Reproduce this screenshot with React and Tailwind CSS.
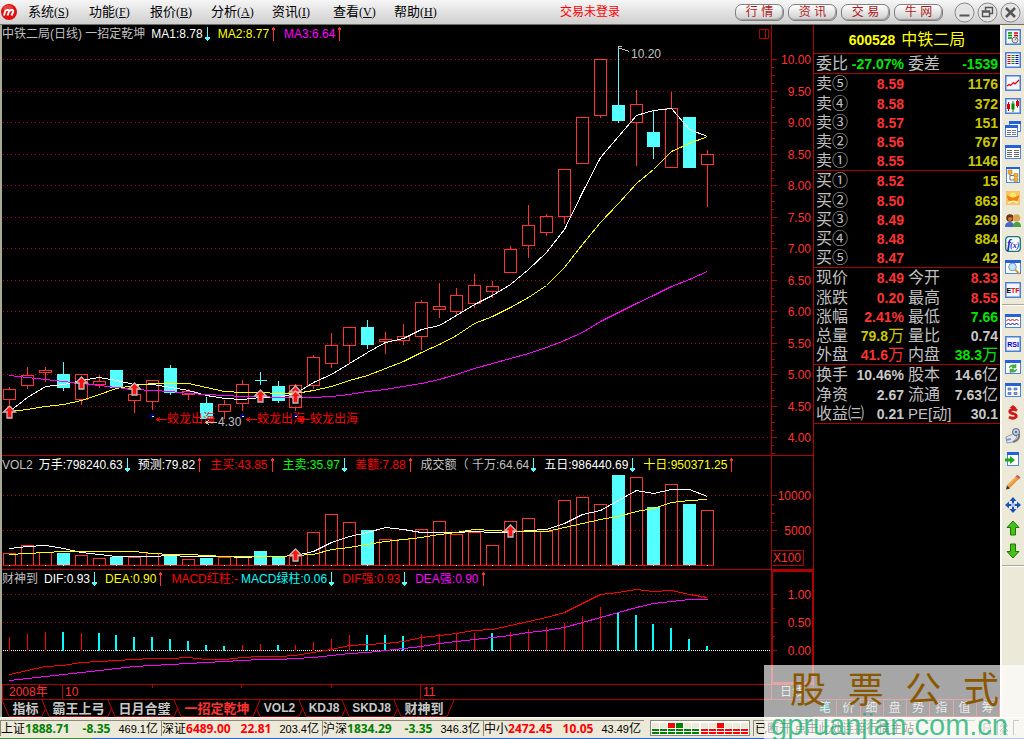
import React from "react";

const RED = "#ff3232";
const DARK = "#b00000";
const CYAN = "#54ffff";

const cx = (i) => Math.round(9 + 17.9 * i) + 0.5;

/* kind (h = hollow, f = filled, x = doji), body top, body bottom, high, low */
const CANDLES = [
  ["h", 389, 399, 387, 405], ["h", 375, 385, 367, 389], ["h", 370, 372, 367, 382], ["f", 374, 388, 362, 391],
  ["h", 374, 399, 374, 405], ["h", 381, 384, 375, 388], ["f", 370, 388, 370, 388], ["h", 394, 400, 387, 413],
  ["h", 380, 401, 380, 410], ["f", 368, 393, 365, 395], ["h", 391, 394, 389, 400], ["f", 403, 419, 397, 419],
  ["h", 404, 411, 400, 419], ["h", 384, 403, 380, 411], ["x", 380, 380, 372, 385], ["f", 386, 401, 381, 403],
  ["h", 385, 407, 384, 411], ["h", 357, 385, 355, 389], ["h", 345, 363, 333, 368], ["h", 327, 345, 327, 363],
  ["f", 327, 345, 320, 349], ["h", 339, 341, 332, 354], ["h", 336, 340, 324, 345], ["h", 302, 336, 300, 350],
  ["h", 306, 309, 283, 318], ["h", 295, 311, 288, 316], ["h", 285, 303, 274, 308], ["h", 286, 291, 281, 298],
  ["h", 249, 272, 246, 272], ["h", 225, 245, 205, 258], ["h", 216, 232, 214, 236], ["h", 169, 216, 169, 224],
  ["h", 117, 163, 117, 163], ["h", 59, 115, 59, 118], ["f", 105, 121, 46, 123], ["h", 104, 122, 90, 166],
  ["f", 132, 147, 110, 159], ["h", 108, 167, 92, 167], ["f", 117, 168, 117, 168], ["h", 154, 164, 150, 207],
];
const MA1 = [411, 397, 386, 384, 380, 377, 380, 384, 384, 387, 390, 395, 398, 399, 397, 397, 393, 382, 374, 363, 352, 342, 338, 329, 325, 315, 304, 295, 284, 269, 252, 229, 192, 157, 136, 115, 110, 108, 129, 136];
const MA2 = [411, 409, 406, 404, 400, 394, 388, 385, 383, 383, 383, 387, 391, 392, 392, 393, 393, 390, 386, 380, 375, 368, 361, 352, 344, 335, 323, 316, 307, 297, 285, 267, 244, 222, 203, 183, 169, 151, 143, 136];
const MA3 = [375, 377, 379, 381, 383, 385, 387, 389, 390, 391, 393, 394, 395, 396, 396, 397, 397, 397, 396, 394, 391, 389, 386, 383, 379, 374, 368, 363, 358, 353, 347, 340, 332, 321, 312, 303, 295, 286, 279, 271];

const VOLUME = [553, 545, 552, 553, 555, 558, 557, 557, 553, 554, 559, 558, 557, 557, 551, 556, 556, 532, 514, 522, 530, 539, 539, 529, 521, 534, 532, 545, 521, 518, 531, 500, 497, 504, 475, 477, 507, 484, 504, 510];
const VOL_CYAN = [3, 6, 9, 11, 14, 15, 20, 34, 36, 38];
const VMA5 = [548, 546, 545, 548, 552, 554, 556, 556, 556, 555, 556, 556, 556, 557, 556, 556, 555, 551, 542, 536, 532, 527, 529, 532, 532, 532, 531, 532, 532, 530, 529, 523, 514, 510, 500, 490, 493, 489, 489, 496];
const VMA10 = [554, 553, 552, 551, 551, 551, 551, 551, 553, 554, 554, 555, 556, 556, 556, 556, 555, 554, 549, 547, 544, 541, 539, 537, 534, 532, 529, 530, 531, 531, 531, 527, 523, 519, 516, 511, 508, 502, 500, 499];

const MACD = [637, 634, 632, 632, 633, 633, 635, 637, 637, 639, 641, 645, 646, 645, 644, 645, 645, 642, 639, 635, 635, 635, 636, 634, 634, 634, 633, 633, 632, 629, 627, 623, 616, 607, 612, 615, 624, 628, 639, 646];
const MACD_CYAN = [3, 5, 6, 7, 8, 9, 10, 11, 12, 15, 20, 21, 22, 27, 34, 35, 36, 37, 38, 39];
const DIF = [674, 670, 666, 665, 662, 661, 660, 659, 658, 658, 657, 659, 659, 657, 656, 656, 655, 652, 649, 645, 644, 643, 641, 637, 635, 633, 630, 629, 625, 621, 617, 612, 603, 594, 592, 589, 591, 590, 594, 597];
const DEA = [680, 678, 676, 674, 672, 670, 668, 666, 665, 664, 663, 662, 661, 660, 659, 659, 658, 657, 655, 653, 652, 650, 648, 646, 643, 641, 639, 637, 635, 632, 630, 627, 622, 617, 612, 607, 603, 601, 599, 599];

function Line({ data, color }) {
  return <polyline points={data.map((y, i) => `${cx(i)},${y + 0.5}`).join(" ")} fill="none" stroke={color} strokeWidth="1" />;
}

function Grid({ ys }) {
  return ys.map((y) => <line key={y} x1="3" x2="4000" y1={y + 0.5} y2={y + 0.5} stroke={DARK} strokeDasharray="1 3" />);
}

function Buy({ x, y }) {
  return <path d={`M${x} ${y - 6}l6 6h-3.5v6h-5v-6h-3.5z`} fill="#ff1010" stroke="#c8b8b8" strokeWidth="1.3" shapeRendering="auto" />;
}

function Candle({ c, i }) {
  const [kind, top, bottom, high, low] = c;
  const x = cx(i);
  const color = kind === "h" ? RED : CYAN;
  return (
    <g stroke={color} fill="none">
      {high < top && <line x1={x} x2={x} y1={high} y2={top} />}
      {low > bottom && <line x1={x} x2={x} y1={bottom} y2={low} />}
      {kind === "h" && <rect x={x - 6} y={top + 0.5} width="12" height={bottom - top} />}
      {kind === "f" && <rect x={x - 6.5} y={top} width="13" height={bottom - top} fill={CYAN} stroke="none" />}
      {kind === "x" && <line x1={x - 6} x2={x + 6} y1={top + 0.5} y2={top + 0.5} />}
    </g>
  );
}

function Signal({ x }) {
  return (
    <g>
      <circle cx={x - 5} cy="416" r="2" fill="#0000a0" shapeRendering="auto" />
      <rect x={x - 5} y="416" width="2" height="1" fill="#fff" />
      <path d={`M${x} 419.5h10M${x + 3} 417l-3 2.5l3 2.5`} fill="none" stroke="#f00" />
      <text x={x + 10} y="423" className="fill-[#ff0000] text-[12px]">蛟龙出海</text>
    </g>
  );
}

function Trend({ dir }) {
  return (
    <svg className="ml-px h-[16px] w-[6px] shrink-0" viewBox="0 0 6 16" shapeRendering="crispEdges" aria-hidden="true">
      {dir === "up" ? (
        <path d="M3 1h1v1h1v2h-1v11h-1V4h-1V2h1z" fill={RED} />
      ) : (
        <path d="M3 1h1v10h2v2h-1v1h-1v1h-1v-1h-1v-1h-1v-2h2z" fill={CYAN} />
      )}
    </svg>
  );
}

function Header({ name, items, children }) {
  return (
    <div className="flex h-[18px] items-center overflow-hidden whitespace-pre text-[12px] leading-[18px]">
      <span className="mr-[6px] text-[#c0c0c0]">{name}</span>
      {items.map(([text, cls, dir]) => (
        <span key={text} className={"flex items-center " + (dir ? "mr-[8px] " : "mr-[3px] ") + cls}>
          {text}
          {dir && <Trend dir={dir} />}
        </span>
      ))}
      {children}
    </div>
  );
}

function PriceAxis() {
  const labels = ["10.00", "9.50", "9.00", "8.50", "8.00", "7.50", "7.00", "6.50", "6.00", "5.50", "5.00", "4.50", "4.00"];
  return (
    <svg className="block h-[430px] w-full" shapeRendering="crispEdges">
      <g transform="translate(0,-25)">
        {labels.map((t, k) => {
          const y = Math.round(59 + 31.5 * k);
          return (
            <g key={t}>
              <path d={`M0 ${y + 0.5}h5M0 ${y + 8.5}h2M0 ${y + 16.5}h3M0 ${y + 24.5}h2`} stroke={DARK} />
              <text x="39" y={y + 5} textAnchor="end" className="fill-[#ff3232] text-[12px]">{t}</text>
            </g>
          );
        })}
      </g>
    </svg>
  );
}

const INDEX_BTNS = ["行 情", "资 讯", "交 易", "牛 网"];
const MENUS = [["系统", "S"], ["功能", "F"], ["报价", "B"], ["分析", "A"], ["资讯", "I"], ["查看", "V"], ["帮助", "H"]];

function TopBar() {
  return (
    <header className="flex h-[24px] items-center bg-gradient-to-b from-[#f6f6f6] to-[#cfcfcf] text-[12px]">
      <svg className="ml-[1px] h-[16px] w-[16px]" viewBox="0 0 16 16" aria-hidden="true">
        <circle cx="8" cy="8" r="8" fill="#e01010" />
        <ellipse cx="7" cy="4" rx="5" ry="3" fill="#f06060" opacity=".6" />
        <path d="M3 11.500L4.500 6M6.500 11.500L8 7.500Q8.300 5.800 6.500 6L4.500 6.500M10.500 11.500L12.300 7.500Q12.500 5.500 10.500 6L8 7" fill="none" stroke="#fff" strokeWidth="1.900" />
      </svg>
      <nav className="ml-[11px] flex">
        {MENUS.map(([t, k]) => (
          <button key={t} type="button" className="flex w-[61px] items-center whitespace-nowrap text-[13px] text-black">
            {t}
            <span className="font-['Liberation_Serif',serif] text-[12px]">(<u>{k}</u>)</span>
          </button>
        ))}
      </nav>
      <span className="ml-auto mr-[115px] text-[#ff0000]">交易未登录</span>
      <div className="flex gap-[4px]">
        {INDEX_BTNS.map((t) => (
          <button key={t} type="button" className="flex h-[17px] w-[49px] items-center justify-center whitespace-pre rounded-[7px] border border-[#808080] bg-gradient-to-b from-white to-[#cccccc] text-[12px] leading-none text-[#b01818] shadow-[inset_-1px_-1px_1px_#999]">
            {t}
          </button>
        ))}
      </div>
      <div className="ml-[11px] mr-[3px] flex gap-[2px]">
        {[
          ["最小化", <path key="a" d="M5.500 13.500h10" strokeWidth="2" />],
          ["还原", <path key="b" d="M8.500 8V5.500h7v6h-2.500M5.500 9h7v5.500h-7zM5.500 10h7" strokeWidth="1.400" />],
          ["关闭", <path key="c" d="M6 6l9 9M15 6l-9 9" strokeWidth="2.600" />],
        ].map(([label, d]) => (
          <button key={label} type="button" aria-label={label} className="h-[21px] w-[21px]">
            <svg viewBox="0 0 21 21" className="h-full w-full" fill="none" stroke="#555">
              <circle cx="10.500" cy="10.500" r="9.500" stroke="#888" fill="#e4e4e4" />
              {d}
            </svg>
          </button>
        ))}
      </div>
    </header>
  );
}

const R = "text-[#ff3232]";
const G = "text-[#00e600]";
const Y = "text-[#c8c800]";
const W = "text-[#c8c8c8]";
const GROUPS = [
  [["委比", "-27.07%", G, "委差", "-1539", G]],
  [["卖⑤", "8.59", R, "", "1176", Y], ["卖④", "8.58", R, "", "372", Y], ["卖③", "8.57", R, "", "151", Y], ["卖②", "8.56", R, "", "767", Y], ["卖①", "8.55", R, "", "1146", Y]],
  [["买①", "8.52", R, "", "15", Y], ["买②", "8.50", R, "", "863", Y], ["买③", "8.49", R, "", "269", Y], ["买④", "8.48", R, "", "884", Y], ["买⑤", "8.47", R, "", "42", Y]],
  [["现价", "8.49", R, "今开", "8.33", R], ["涨跌", "0.20", R, "最高", "8.55", R], ["涨幅", "2.41%", R, "最低", "7.66", G], ["总量", "79.8万", Y, "量比", "0.74", W], ["外盘", "41.6万", R, "内盘", "38.3万", G]],
  [["换手", "10.46%", W, "股本", "14.6亿", W], ["净资", "2.67", W, "流通", "7.63亿", W], ["收益㈢", "0.21", W, "PE[动]", "30.1", W]],
];

function Value({ text }) {
  const unit = text.match(/[万亿]$/);
  return unit ? <>{text.slice(0, -1)}<span className="text-[16px] font-normal">{unit[0]}</span></> : text;
}

function QuotePanel() {
  const tabs = ["笔", "价", "细", "盘", "势", "指", "值", "筹"];
  return (
    <aside className="flex w-[186px] shrink-0 flex-col bg-black">
      <h1 className="flex h-[28px] items-center justify-center gap-[6px] pt-[2px] text-[16px] text-[#ffff00]">
        <b className="text-[14px]">600528</b>中铁二局
      </h1>
      <table className="w-full table-fixed border-separate border-spacing-0 whitespace-nowrap text-[16px] leading-[18px]">
        <colgroup>
          <col className="w-[34px]" />
          <col className="w-[58px]" />
          <col className="w-[34px]" />
          <col />
        </colgroup>
        {GROUPS.map((rows, g) => (
          <tbody key={g}>
            {rows.map(([a, b, cb, c, d, cd], r) => {
              const edge = r === 0 ? "border-t border-[#b00000] " : "";
              const h = r === 0 && g > 0 ? "h-[21px] " : r === 0 ? "h-[20px] " : "h-[19px] ";
              return (
                <tr key={a}>
                  <th scope="row" className={edge + h + "pl-[2px] text-left font-normal text-[#c0c0c0]"}>{a}</th>
                  <td className={edge + "pr-[2px] text-right text-[14px] font-bold " + cb}><Value text={b} /></td>
                  <td className={edge + "pl-[2px] text-[#c0c0c0]"}>{c.startsWith("PE") ? <span className="text-[15px]">{c}</span> : c}</td>
                  <td className={edge + "pr-[2px] text-right text-[14px] font-bold " + cd}><Value text={d} /></td>
                </tr>
              );
            })}
          </tbody>
        ))}
      </table>
      <div className="border-t border-[#b00000]" />
      <div className="mt-auto flex h-[18px] border-t border-[#b00000] text-[12px] leading-none text-[#c0c0c0]">
        {tabs.map((t, i) => (
          <button key={t} type="button" className={"flex-1 border-b border-r border-[#b00000] " + (i === 0 ? "text-[#54ffff]" : "")}>{t}</button>
        ))}
      </div>
    </aside>
  );
}

function Win({ children }) {
  return (
    <>
      <rect x=".5" y="1.500" width="15" height="13" fill="#fff" stroke="#4a86e0" />
      <rect x="0" y="1" width="16" height="3" fill="#2460d8" />
      {children}
    </>
  );
}
function Box({ children }) {
  return (
    <>
      <rect x=".75" y=".75" width="14.500" height="14.500" fill="#f4f6fc" stroke="#4a80d8" strokeWidth="1.500" />
      {children}
    </>
  );
}

const TOOLS = [
  ["报价", <Box key="1"><path d="M3 4h4M3 6.500h4M3 9h4" stroke="#080" strokeWidth="1.300" /><path d="M9 4h4M9 6.500h4" stroke="#d00" strokeWidth="1.300" /><circle cx="10" cy="11" r="3" fill="#ddd" stroke="#777" /><path d="M10 11l3-4" stroke="#777" /></Box>],
  ["列表", <Box key="1"><path d="M4 3v10" stroke="#d00" strokeWidth="3" strokeDasharray="1 1" /><path d="M8 3v10" stroke="#080" strokeWidth="3" strokeDasharray="1 1" /><path d="M12 3v10" stroke="#00c" strokeWidth="3" strokeDasharray="1 1" /></Box>],
  ["分时", <Box key="1"><path d="M2 11l2-1.500l1.500 1l3-3l1.500 1.500l2-2l2-2" fill="none" stroke="#d00" strokeWidth="1.200" /></Box>],
  ["K线", <Box key="1"><path d="M3.500 4v9M12.500 1.500v8" stroke="#d00" /><path d="M8 3v11" stroke="#080" /><rect x="2" y="6" width="3" height="5" fill="#d00" /><rect x="6.500" y="5.500" width="3" height="6" fill="#080" /><rect x="11" y="3" width="3" height="5" fill="#d00" /></Box>],
  ["多窗口", <g key="1"><rect x="4.500" y=".5" width="11" height="10" fill="#fff" stroke="#4a86e0" /><rect x="4" y="0" width="12" height="3" fill="#2460d8" /><rect x=".5" y="4.500" width="12" height="11" fill="#fff" stroke="#4a86e0" /><rect x="0" y="4" width="13" height="3" fill="#2460d8" /><path d="M2 9.500h4M7 9.500h4M2 11.500h4M7 11.500h4M2 13.500h4M7 13.500h4" stroke="#777" /></g>],
  ["双栏", <Win key="1"><path d="M2 6.500h5M9 6.500h5M2 8.500h5M9 8.500h5M2 10.500h5M9 10.500h5M2 12.500h5M9 12.500h5" stroke="#666" /></Win>],
  ["目录", <g key="1"><rect x="1.500" y=".5" width="13" height="15" fill="#fff" stroke="#4a86e0" /><rect x="1" y="0" width="14" height="2" fill="#2460d8" /><path d="M5 7v6h4M5 8.500h4" fill="none" stroke="#777" /><path d="M3 3h4v4H3zM9 6.500h4v3.500H9zM9 11h4v3.500H9z" fill="#f0b030" stroke="#a87010" strokeWidth=".5" /></g>],
  ["财富", <g key="1"><rect x="1" y="1" width="14" height="14" fill="#f7c568" /><path d="M2 5q6 5 12 0q0 7-6 8q-6-1-6-8" fill="#f08010" /><ellipse cx="8" cy="5" rx="3" ry="2.500" fill="#ffe860" /><path d="M3 13q5-3 10 0" stroke="#fff2b0" strokeWidth="2" fill="none" /></g>],
  ["用户", <g key="1"><circle cx="5" cy="5" r="3.800" fill="#6a3210" /><circle cx="5" cy="6" r="2" fill="#c87840" /><circle cx="11.500" cy="5" r="3.800" fill="#d8a850" /><path d="M0 14q0-5 5-5q4 0 4 5z" fill="#4468c8" /><path d="M8 14q0-5 4-5q4 0 4 5z" fill="#48a048" /></g>],
  ["公式", <g key="1"><rect x=".7" y=".7" width="14.600" height="14.600" rx="3" fill="#fff" stroke="#107878" strokeWidth="1.300" /><text x="2" y="12" className="fill-[#1020c0] font-['Liberation_Serif',serif] text-[12px] font-bold italic">f</text><text x="5" y="12" className="fill-[#1020c0] font-['Liberation_Serif',serif] text-[8px] font-bold italic">(x)</text></g>],
  ["查找", <Win key="1"><circle cx="7.500" cy="8" r="3.800" fill="#c8e4f8" stroke="#7898b8" /><path d="M10.500 11l4 4" stroke="#d09840" strokeWidth="2" /></Win>],
  ["ETF", <Box key="1"><text x="8" y="11" textAnchor="middle" className="font-['Liberation_Sans',sans-serif] text-[7px] font-bold">E<tspan fill="#d00">TF</tspan></text></Box>],
  null,
  ["叠加", <Win key="1"><path d="M1.500 8l2-2l2 2l2-2l2 2l2-2l2 2" fill="none" stroke="#d00" /><path d="M1.500 12l2-2l2 2l2-2l2 2l2-2l2 2" fill="none" stroke="#00c" /></Win>],
  ["RSI", <Box key="1"><text x="8" y="11" textAnchor="middle" className="fill-[#0000c8] font-['Liberation_Sans',sans-serif] text-[7px] font-bold">RSI</text></Box>],
  ["刷新", <Win key="1"><path d="M4 9q1-4 6-3l1-1v4H7l1-1q-2-1-4 1M12 10q-1 4-6 3l-1 1v-4h4l-1 1q2 1 4-1" fill="#48a848" stroke="#48a848" strokeWidth=".6" /></Win>],
  ["排列", <Win key="1"><path d="M3 6h3v2H3zM9 6h3v2H9zM3 10.500h3v2H3zM9 10.500h3v2H9z" fill="#88a8e8" stroke="#4060a8" strokeWidth=".7" /></Win>],
  ["资金", <g key="1"><path d="M12 5.500Q8 3 5 5.500Q4 8 8 8.500Q12 9.500 11 12Q8 14.500 4 12" fill="none" stroke="#d01818" strokeWidth="2.800" /><path d="M4.500 3L8 0l3.500 3z" fill="#d01818" /></g>],
  ["画线", <g key="1"><path d="M1 9l7-3l4 3l-4 5l-6 1z" fill="#e8e8ee" stroke="#999" /><circle cx="11" cy="4" r="3.500" fill="#b8d0e0" stroke="#668" /><circle cx="11" cy="4" r="1.300" fill="#68a" /><path d="M14 6q1 6-6 8" fill="none" stroke="#778" strokeWidth="2" /><path d="M1 12l5-1" stroke="#68a0e0" strokeWidth="2" /></g>],
  ["转到", <g key="1"><rect x="2.500" y="1.500" width="11" height="13" fill="#fff" stroke="#4a86e0" /><rect x="2" y="1" width="12" height="3" fill="#2460d8" /><path d="M0 7.500h5V5l5 4l-5 4v-2.500H0z" fill="#18a818" /></g>],
  ["铅笔", <g key="1"><path d="M3 13L12 4" stroke="#e89838" strokeWidth="4" /><path d="M10.500 2.500L12.500 .8L15.500 3.500L13.500 5.500z" fill="#d85858" /><path d="M1 15.500l1-4l3 3z" fill="#333" /><path d="M3 11.500L11 3.500" stroke="#f8d090" /></g>],
  ["移动", <g key="1" fill="#1c50b8"><path d="M8 0l3.500 4h-7zM8 16l3.500-4h-7zM0 8l4-3.500v7zM16 8l-4-3.500v7z" /><path d="M8 3v10M3 8h10" stroke="#1c50b8" strokeWidth="2" /><circle cx="8" cy="8" r="2" fill="#a8c8f8" /></g>],
  ["上移", <path key="1" d="M8 1l6 6.500h-3.500V15h-5V7.500H2z" fill="#48c018" stroke="#187808" />],
  ["下移", <path key="1" d="M8 15l6-6.500h-3.500V1h-5v7.500H2z" fill="#48c018" stroke="#187808" />],
  null,
];

function Toolbar() {
  return (
    <div role="toolbar" className="flex w-[24px] shrink-0 flex-col items-center border-l-2 border-[#fbfaf5] bg-[#ece9d8]">
      {TOOLS.map((t, i) =>
        t === null ? (
          <div key={i} className="my-[3px] h-[2px] w-full border-b border-t border-b-white border-t-[#aca899]" />
        ) : (
          <button key={i} type="button" aria-label={t[0]} className="flex h-[23px] w-full shrink-0 items-center justify-center">
            <svg className="h-[16px] w-[16px]" viewBox="0 0 16 16">{t[1]}</svg>
          </button>
        )
      )}
    </div>
  );
}

function Slant({ kind }) {
  const d = { first: "M0 0L7 16.500", next: "M0 0L7 16.500M0 16.500L3.500 8.500", after: "M0 16.500L7 0M3.500 8.500L7 16.500", last: "M0 16.500L7 0" }[kind];
  return (
    <svg className="h-[17px] w-[7px] shrink-0 overflow-visible" viewBox="0 0 7 17" aria-hidden="true">
      <path d={d} stroke="#c80000" fill="none" />
    </svg>
  );
}

function IndicatorTabs() {
  const tabs = [
    ["指标", "w-[33px]", "first"],
    ["霸王上弓", "w-[59px]", "next"],
    ["日月合璧", "w-[59px]", "next"],
    ["一招定乾坤", "w-[72px]", "next"],
    ["VOL2", "w-[39px]", "after"],
    ["KDJ8", "w-[36px]", "next"],
    ["SKDJ8", "w-[45px]", "next"],
    ["财神到", "w-[46px]", "next"],
  ];
  return (
    <div className="flex h-[17px] text-[#c8c8c8]">
      {tabs.map(([t, w, kind], i) => (
        <React.Fragment key={t}>
          <Slant kind={kind} />
          <button type="button" className={"flex items-center justify-center overflow-visible whitespace-nowrap border-b border-[#b00000] font-bold leading-none " + w + (i === 3 ? " text-[#ff3232]" : "") + (i > 3 && i < 7 ? " text-[12px]" : " text-[13px]")}>
            {t}
          </button>
        </React.Fragment>
      ))}
      <Slant kind="last" />
    </div>
  );
}

function Index({ name, value, diff, amount, cls }) {
  return (
    <div className="flex h-[16px] w-[161px] shrink-0 items-center whitespace-nowrap border-l border-t border-[#8c8a7c] text-[12px]">
      <span>{name}</span>
      <b className={"font-['Open_Sans',sans-serif] " + cls}>{value}</b>
      <b className={"ml-auto font-['Open_Sans',sans-serif] " + cls}>{diff}</b>
      <span className="ml-[8px] mr-[3px]"><span className="text-[11px]">{amount}</span>亿</span>
    </div>
  );
}

function Lights({ row, color }) {
  return (
    <div className="grid grid-cols-[repeat(6,7px)] gap-px">
      {row.map((c, i) => <i key={i} className={"h-[5px] " + c} />)}
      {row.map((c, i) => <i key={"a" + i} className={"h-[2px] " + color} />)}
      {row.map((c, i) => <i key={"b" + i} className={"h-[2px] " + color} />)}
    </div>
  );
}

function StatusBar() {
  const n = "bg-[#ece9d8]";
  const r = "bg-[#ff0000]";
  const g = "bg-[#008000]";
  return (
    <footer className="border-t border-white bg-[#ece9d8] text-black">
      <div className="flex h-[20px] items-center overflow-hidden">
        <Index name="上证" value="1888.71" diff="-8.35" amount="469.1" cls="text-[#008000]" />
        <Index name="深证" value="6489.00" diff="22.81" amount="203.4" cls="text-[#ff0000]" />
        <Index name="沪深" value="1834.29" diff="-3.35" amount="346.3" cls="text-[#008000]" />
        <Index name="中小" value="2472.45" diff="10.05" amount="43.49" cls="text-[#ff0000]" />
        <div className="ml-[6px] flex h-[16px] shrink-0 items-center gap-[2px] border border-[#8c8a7c] bg-white px-px">
          <Lights row={[n, n, r, g, n, n]} color={g} />
          <Lights row={[n, n, r, n, n, n]} color={r} />
        </div>
        <div className="ml-[3px] flex h-[16px] flex-1 items-center whitespace-nowrap border-l border-t border-[#8c8a7c] pl-px text-[12px]">
          已断开,点击此处连接行情主站
        </div>
        <svg className="ml-1 mr-[5px] h-[16px] w-[40px] shrink-0" viewBox="0 0 40 16" fill="none" stroke="#666" aria-hidden="true">
          <path d="M.5 15V.5M5 4q6-2 6 3l1 7H5zM6 8h4M18.500 15V.5M21 6l4-4l4 4zM21 11l4-4l4 4zM21 15l4-3l4 3M34.500 15V.5H40" />
        </svg>
      </div>
      <div className="h-[2px] bg-gradient-to-r from-[#3c8c3c] from-[9%] to-[#2a5fc8] to-[9%]" />
    </footer>
  );
}

function Watermark() {
  return (
    <div className="pointer-events-none absolute bottom-0 right-0 h-[75px] w-[260px] bg-white/65">
      <div className="flex justify-between pl-[26px] pr-[25px] pt-[8px] text-[36px] leading-[36px] text-[#8a5800]">
        <span>股</span><span>票</span><span>公</span><span>式</span>
      </div>
      <div className="pl-[7px] text-[29px] leading-[32px] text-[#10b070]/75">gpruanjian.com.cn</div>
    </div>
  );
}

export default function App() {
  return (
    <div className="relative flex min-h-screen flex-col bg-[#ece9d8] font-['Liberation_Sans','Noto_Sans_CJK_SC',sans-serif]">
      <TopBar />
      <div className="flex flex-1 border-t border-[#716f64]">
        <main className="flex min-w-0 flex-1 flex-col border-l-2 border-[#aca899] bg-black">
          <section className="flex border-b border-[#b00000]">
            <div className="min-w-0 flex-1">
              <Header
                name="中铁二局(日线) 一招定乾坤"
                items={[["MA1:8.78", "text-white", "down"], ["MA2:8.77", "text-[#ffff00]", "up"], ["MA3:6.64", "text-[#ff00ff]", "up"]]}
              >
                <svg className="ml-auto mr-[2px] h-[11px] w-[10px]" viewBox="0 0 10 11" aria-hidden="true">
                  <path d="M.5 .5h9v9h-9zM6.500 .5v9" fill="none" stroke={DARK} />
                </svg>
              </Header>
              <svg className="block h-[412px] w-full" shapeRendering="crispEdges">
                <g transform="translate(-2,-43)">
                  <Grid ys={Array.from({ length: 13 }, (_, k) => Math.round(59 + 31.5 * k))} />
                  {CANDLES.map((c, i) => <Candle key={i} c={c} i={i} />)}
                  <Line data={MA1} color="#fff" />
                  <Line data={MA2} color="#ff0" />
                  <Line data={MA3} color="#f0f" />
                  {[[9.5, 412], [81.5, 383], [134.5, 389], [260.5, 396], [295.5, 392], [295.5, 397]].map(([x, y]) => <Buy key={x + y} x={x} y={y} />)}
                  <Signal x={157} />
                  <Signal x={247} />
                  <Signal x={300} />
                  <path d="M206 422.500h11M209 420l-3 2.500l3 2.500M618 46.500h4M618 46v4M618 47.500l11 4" fill="none" stroke="#c0c0c0" />
                  <text x="218" y="426" className="fill-[#c0c0c0] text-[12px]">4.30</text>
                  <text x="631" y="58" className="fill-[#c0c0c0] text-[12px]">10.20</text>
                </g>
              </svg>
            </div>
            <div className="w-[43px] shrink-0 border-l border-r border-[#b00000]"><PriceAxis /></div>
          </section>

          <section className="flex border-b border-[#b00000]">
            <div className="min-w-0 flex-1">
              <Header
                name="VOL2"
                items={[
                  ["万手:798240.63", "text-white", "down"],
                  ["预测:79.82", "text-white", "up"],
                  ["主买:43.85", "text-[#ff0000]", "up"],
                  ["主卖:35.97", "text-[#00ff00]", "down"],
                  ["差额:7.88", "text-[#ff0000]", "up"],
                  ["成交额（ 千万:64.64", "text-[#c0c0c0]", "down"],
                  ["五日:986440.69", "text-white", "down"],
                  ["十日:950371.25", "text-[#ffff00]", "up"],
                ]}
              />
              <svg className="block h-[95px] w-full" shapeRendering="crispEdges">
                <g transform="translate(-2,-474)">
                  <Grid ys={[495, 530]} />
                  {VOLUME.map((y, i) =>
                    VOL_CYAN.includes(i) ? (
                      <rect key={i} x={cx(i) - 6.5} y={y} width="13" height={565 - y} fill={CYAN} />
                    ) : (
                      <rect key={i} x={cx(i) - 6} y={y + 0.5} width="12" height={565 - y} fill="none" stroke={RED} />
                    )
                  )}
                  <line x1="3" x2="714" y1="565.5" y2="565.5" stroke="#f00" />
                  {VOLUME.map((_, i) => <rect key={i} x={cx(i) - 0.5} y="565" width="1" height="1" fill="#fff" />)}
                  <Line data={VMA5} color="#fff" />
                  <Line data={VMA10} color="#ff0" />
                  <Buy x={295.5} y={555} />
                  <Buy x={510.5} y={531} />
                </g>
              </svg>
            </div>
            <div className="w-[43px] shrink-0 border-l border-r border-[#b00000]">
              <svg className="block h-[113px] w-full" shapeRendering="crispEdges">
                <path d="M0 39.500h5M0 48.500h2M0 57.500h3M0 66.500h2M0 74.500h5M0 94.500h31.500v15H0" fill="none" stroke={DARK} />
                <text x="39" y="44" textAnchor="end" className="fill-[#ff3232] text-[12px]">10000</text>
                <text x="39" y="79" textAnchor="end" className="fill-[#ff3232] text-[12px]">5000</text>
                <text x="1" y="106" className="fill-[#ff3232] text-[12px]">X100</text>
              </svg>
            </div>
          </section>

          <section className="flex border-b border-[#b00000]">
            <div className="min-w-0 flex-1">
              <Header
                name="财神到"
                items={[
                  ["DIF:0.93", "text-white", "down"],
                  ["DEA:0.90", "text-[#ffff00]", "up"],
                  ["MACD红柱:-", "text-[#ff0000]", null],
                  ["MACD绿柱:0.06", "text-[#00ffff]", "down"],
                  ["DIF强:0.93", "text-[#ff0000]", "down"],
                  ["DEA强:0.90", "text-[#ff00ff]", "up"],
                ]}
              />
              <svg className="block h-[96px] w-full" shapeRendering="crispEdges">
                <g transform="translate(-2,-588)">
                  <Grid ys={[594, 622]} />
                  <line x1="3" x2="4000" y1="650.5" y2="650.5" stroke="#fff" strokeDasharray="1 1" />
                  {MACD.map((y, i) =>
                    MACD_CYAN.includes(i) ? (
                      <rect key={i} x={cx(i) - 1.5} y={y} width="2" height={651 - y} fill="#0ff" />
                    ) : (
                      <rect key={i} x={cx(i) - 0.5} y={y} width="1" height={651 - y} fill="#f00" />
                    )
                  )}
                  <Line data={DIF} color="#f00" />
                  <Line data={DEA} color="#f0f" />
                </g>
              </svg>
            </div>
            <div className="w-[43px] shrink-0 border-2 border-[#b00000]">
              <svg className="block h-[110px] w-full" shapeRendering="crispEdges">
                <path d="M0 22.500h4M0 36.500h2M0 50.500h4M0 64.500h2M0 78.500h4" stroke={DARK} />
                <text x="38" y="27" textAnchor="end" className="fill-[#ff3232] text-[12px]">1.00</text>
                <text x="38" y="55" textAnchor="end" className="fill-[#ff3232] text-[12px]">0.50</text>
                <text x="38" y="83" textAnchor="end" className="fill-[#ff3232] text-[12px]">0.00</text>
              </svg>
            </div>
          </section>

          <div className="flex h-[15px] items-center border-b border-l border-[#b00000] text-[12px] leading-none text-[#ff3232]">
            <div className="w-[59px] shrink-0 pl-[6px]">2008年</div>
            <div className="flex h-full w-[358px] shrink-0 items-center border-l border-[#b00000] pl-[2px]">
              <span className="w-[16px]">10</span>
              <svg className="h-full flex-1" shapeRendering="crispEdges" aria-hidden="true">
                <path d="M71.500 0v3M160.500 0v3M250.500 0v3" stroke={DARK} />
              </svg>
            </div>
            <div className="flex h-full flex-1 items-center border-l border-[#b00000] pl-[2px]">11</div>
            <div className="flex h-full w-[43px] shrink-0 items-center border-l border-r border-[#b00000] pl-[8px] text-[#c8c8c8]">日线</div>
          </div>
          <IndicatorTabs />
        </main>
        <QuotePanel />
        <Toolbar />
      </div>
      <StatusBar />
      <Watermark />
    </div>
  );
}
